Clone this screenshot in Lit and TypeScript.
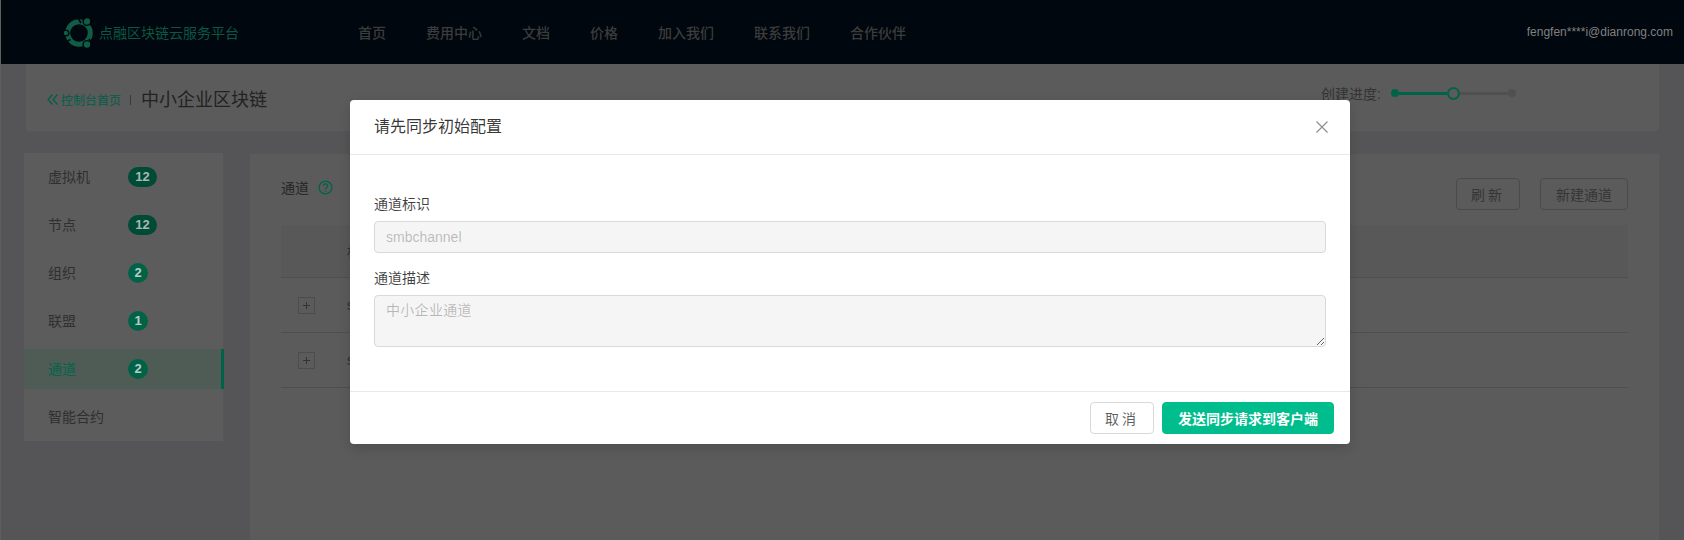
import { LitElement, html, css } from "lit";
import { customElement } from "lit/decorators.js";

const NAV = ["首页", "费用中心", "文档", "价格", "加入我们", "联系我们", "合作伙伴"];
const SIDE: [string, string][] = [
  ["虚拟机", "12"], ["节点", "12"], ["组织", "2"], ["联盟", "1"], ["通道", "2"], ["智能合约", ""],
];

@customElement("app-root")
export class AppRoot extends LitElement {
  static styles = css`
    :host {
      display: block; position: relative; width: 1684px; height: 540px; overflow: hidden;
      font-family: "Liberation Sans", "Noto Sans CJK SC", sans-serif; background: #5e5e5e;
      font-size: 14px; color: #2e2e2e;
    }
    .page { display: flex; flex-direction: column; height: 540px; margin-left: 1px; background: #555557; }
    .top { height: 64px; flex: none; background: #00070e; display: flex; align-items: center; padding: 0 11px 0 63px; }
    .logo { display: flex; align-items: center; gap: 5px; width: 294px; flex: none; color: #0a5843; }
    .logo svg { display: block; margin-top: 2px; }
    nav { display: flex; gap: 40px; flex: 1; color: #3c3c3c; font-weight: 500; }
    .user { color: #808080; font-size: 12px; }
    .crumb {
      margin: 0 24px; height: 68px; flex: none; background: #5b5b5b; border-radius: 0 0 5px 5px;
      border: 1px solid #565656; border-top: 0;
      display: flex; align-items: center; padding: 0 21px; box-sizing: border-box;
    }
    .back { color: #005f47; font-size: 12px; display: flex; align-items: center; gap: 3px; margin-top: 4px; }
    .sep { width: 1px; height: 10px; background: #3a3a3a; margin: 4px 10px 0 9px; }
    .name { font-size: 18px; color: #222; flex: 1; }
    .prog { display: flex; align-items: center; color: #333; margin-right: 122px; margin-top: -9px; }
    .track { display: flex; align-items: center; margin-left: 10px; }
    .dot { width: 8px; height: 8px; border-radius: 50%; background: #006348; flex: none; }
    .dot.off { background: #505050; }
    .dot.ring { width: 9px; height: 9px; background: #5b5b5b; border: 2px solid #006348; }
    .line { width: 48px; height: 3px; background: #006348; }
    .line.off { background: #505050; }
    .body { display: flex; flex: 1; gap: 26px; margin: 21px 24px 0 23px; min-height: 0; }
    .side { width: 199px; height: 288px; background: #5c5c5c; flex: none; padding-top: 4px; box-sizing: border-box; }
    .item {
      height: 40px; margin-bottom: 8px; display: flex; align-items: center; padding-left: 24px;
      position: relative; color: #2f2f2f;
    }
    .item.on { background: #4f5c56; color: #00654b; }
    .item.on::after { content: ""; position: absolute; right: -1px; top: 0; bottom: 0; width: 3px; background: #006348; }
    .label { width: 80px; flex: none; margin-bottom: 2px; }
    .badge {
      min-width: 20px; height: 20px; border-radius: 10px; background: #006348; color: #bccbc4;
      font-size: 13px; font-weight: 700; line-height: 20px; text-align: center; box-sizing: border-box;
    }
    .badge.wide { width: 29px; background: #004a36; color: #a8b9b1; }
    .main { flex: 1; background: #5b5b5b; border: 1px solid #565656; border-bottom: 0; padding: 24px 31px 0 31px; }
    .bar { display: flex; align-items: flex-start; height: 32px; }
    .ch { display: flex; align-items: center; gap: 9px; flex: 1; height: 20px; color: #262626; margin-top: -1px; }
    .btn {
      height: 32px; border: 1px solid #4a4a4a; border-radius: 4px; background: #5b5b5b; font: inherit;
      color: #353535; padding: 0; box-sizing: border-box; display: block;
    }
    .refresh { width: 64px; margin-right: 20px; letter-spacing: 3px; }
    .create { width: 88px; }
    .table { margin-top: 15px; color: #2e2e2e; }
    .row { display: flex; align-items: center; height: 55px; border-bottom: 1px solid #4f4f4f; box-sizing: border-box; }
    .row.head { height: 53px; background: #585858; }
    .cell-a { width: 66px; flex: none; display: flex; padding-left: 17px; box-sizing: border-box; }
    .plus { width: 17px; height: 17px; border: 1px solid #4c4c4c; box-sizing: border-box; display: flex; align-items: center; justify-content: center; }
    .plus svg { display: block; }
    .overlay {
      position: absolute; inset: 0;
      display: flex; justify-content: center; align-items: flex-start; padding: 100px 0 0 16px; box-sizing: border-box;
    }
    .modal { width: 1000px; height: 344px; background: #fff; border-radius: 4px; box-shadow: 0 4px 12px rgba(0,0,0,.15); display: flex; flex-direction: column; color: rgba(0,0,0,.65); }
    .m-head { height: 55px; flex: none; border-bottom: 1px solid #e8e8e8; box-sizing: border-box; display: flex; align-items: center; padding: 0 22px 5px 24px; justify-content: space-between; font-size: 16px; color: rgba(0,0,0,.8); }
    .m-head svg { display: block; margin-top: 5px; }
    .m-body { flex: 1; padding: 38px 24px 0 24px; display: flex; flex-direction: column; }
    label { display: block; height: 22px; line-height: 22px; margin-bottom: 6px; color: rgba(0,0,0,.75); }
    .field {
      display: block; width: 100%; height: 32px; box-sizing: border-box; background: #f5f5f5; border: 1px solid #d9d9d9;
      border-radius: 4px; padding: 4px 11px; font: inherit; color: rgba(0,0,0,.25); margin-bottom: 14px; outline: none;
    }
    textarea.field { height: 52px; line-height: 22px; padding-top: 3px; letter-spacing: .3px; }
    .m-foot { height: 53px; flex: none; border-top: 1px solid #e8e8e8; box-sizing: border-box; display: flex; justify-content: flex-end; align-items: center; gap: 8px; padding: 0 16px; }
    .m-foot .btn { background: #fff; border-color: #d9d9d9; color: rgba(0,0,0,.65); }
    .m-foot .cancel { width: 64px; letter-spacing: 3px; }
    .m-foot .ok { width: 172px; background: #00bd8d; border-color: #00bd8d; color: #fff; font-weight: 700; }
  `;

  render() {
    const plus = html`<div class="plus"><svg width="7" height="7" viewBox="0 0 7 7"><path d="M3.5 0v7M0 3.5h7" stroke="#333" fill="none"/></svg></div>`;
    return html`
      <div class="page">
        <header class="top">
          <div class="logo">
            <svg width="30" height="30" viewBox="0 0 30 30" fill="none">
              <circle cx="15" cy="15" r="11.3" stroke="#0f5c47" stroke-width="5"/>
              <path d="M17 5 L14 0M25 21l3 4M6.5 21.5 2 24" stroke="#00070e" stroke-width="1.6"/>
              <g fill="#0f5c47" stroke="#00070e" stroke-width="1.4">
                <circle cx="23" cy="3.5" r="3.9"/><circle cx="2" cy="15" r="2.9"/><circle cx="23" cy="26.5" r="3.9"/>
              </g>
            </svg>
            <span>点融区块链云服务平台</span>
          </div>
          <nav>${NAV.map((n) => html`<span>${n}</span>`)}</nav>
          <div class="user">fengfen****i@dianrong.com</div>
        </header>
        <section class="crumb">
          <div class="back">
            <svg width="11" height="11" viewBox="0 0 11 11" fill="none" stroke="#005f47" stroke-width="1.2"><path d="M5.5 .5 1 5.5l4.5 5M10.5 .5 6 5.5l4.5 5"/></svg>
            <span>控制台首页</span>
          </div>
          <i class="sep"></i>
          <div class="name">中小企业区块链</div>
          <div class="prog">
            <span>创建进度:</span>
            <div class="track">
              <i class="dot"></i><i class="line"></i><i class="dot ring"></i><i class="line off"></i><i class="dot off"></i>
            </div>
          </div>
        </section>
        <div class="body">
          <aside class="side">
            ${SIDE.map(([l, c]) => html`
              <div class="item ${l === "通道" ? "on" : ""}">
                <span class="label">${l}</span>
                ${c ? html`<span class="badge ${c.length > 1 ? "wide" : ""}">${c}</span>` : ""}
              </div>`)}
          </aside>
          <main class="main">
            <div class="bar">
              <div class="ch">
                <span>通道</span>
                <svg width="15" height="15" viewBox="0 0 15 15" fill="none">
                  <circle cx="7.5" cy="7.5" r="6.4" stroke="#006348" stroke-width="1.3"/>
                  <path d="M5.4 5.9a2.1 2.1 0 1 1 3.2 1.8c-.7.4-1.1.8-1.1 1.6" stroke="#006348" stroke-width="1.3"/>
                  <circle cx="7.5" cy="11" r=".85" fill="#006348"/>
                </svg>
              </div>
              <button class="btn refresh">刷新</button>
              <button class="btn create">新建通道</button>
            </div>
            <div class="table">
              <div class="row head"><div class="cell-a"></div><span>标识</span></div>
              <div class="row"><div class="cell-a">${plus}</div><span>smbchannel</span></div>
              <div class="row"><div class="cell-a">${plus}</div><span>smbchannel</span></div>
            </div>
          </main>
        </div>
      </div>
      <div class="overlay">
        <div class="modal">
          <div class="m-head">
            <span>请先同步初始配置</span>
            <svg width="12" height="12" viewBox="0 0 12 12" fill="none" stroke="#8c8c8c" stroke-width="1.1"><path d="M.5 .5l11 11M11.5 .5l-11 11"/></svg>
          </div>
          <div class="m-body">
            <label>通道标识</label>
            <input class="field" disabled value="smbchannel" />
            <label>通道描述</label>
            <textarea class="field" disabled>中小企业通道</textarea>
          </div>
          <div class="m-foot">
            <button class="btn cancel">取消</button>
            <button class="btn ok">发送同步请求到客户端</button>
          </div>
        </div>
      </div>
    `;
  }
}
